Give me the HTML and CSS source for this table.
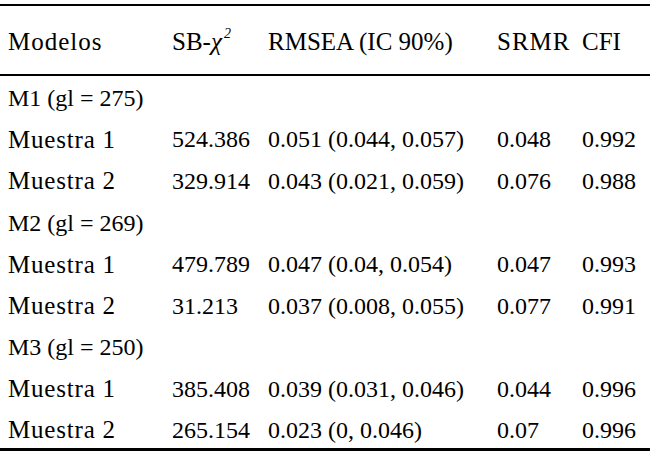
FILE: index.html
```html
<!DOCTYPE html>
<html lang="es">
<head>
<meta charset="utf-8">
<title>Modelos</title>
<link rel="stylesheet" href="styles.css">
</head>
<body>
<table class="fit">
  <colgroup>
    <col class="w1"><col class="w2"><col class="w3"><col class="w4"><col class="w5">
  </colgroup>
  <thead>
    <tr class="head">
      <th class="wide">Modelos</th>
      <th>SB-<i class="chi">χ</i><sup>2</sup></th>
      <th>RMSEA (IC 90%)</th>
      <th class="wide">SRMR</th>
      <th>CFI</th>
    </tr>
  </thead>
  <tbody>
    <tr class="grp"><td colspan="5">M1 (gl = 275)</td></tr>
    <tr><td class="lbl">Muestra 1</td><td>524.386</td><td>0.051 (0.044, 0.057)</td><td>0.048</td><td>0.992</td></tr>
    <tr><td class="lbl">Muestra 2</td><td>329.914</td><td>0.043 (0.021, 0.059)</td><td>0.076</td><td>0.988</td></tr>
    <tr class="grp"><td colspan="5">M2 (gl = 269)</td></tr>
    <tr><td class="lbl">Muestra 1</td><td>479.789</td><td>0.047 (0.04, 0.054)</td><td>0.047</td><td>0.993</td></tr>
    <tr><td class="lbl">Muestra 2</td><td>31.213</td><td>0.037 (0.008, 0.055)</td><td>0.077</td><td>0.991</td></tr>
    <tr class="grp"><td colspan="5">M3 (gl = 250)</td></tr>
    <tr><td class="lbl">Muestra 1</td><td>385.408</td><td>0.039 (0.031, 0.046)</td><td>0.044</td><td>0.996</td></tr>
    <tr><td class="lbl">Muestra 2</td><td>265.154</td><td>0.023 (0, 0.046)</td><td>0.07</td><td>0.996</td></tr>
  </tbody>
</table>
</body>
</html>
```
FILE: styles.css
```css
html, body {
  margin: 0;
  padding: 0;
  background: #ffffff;
}
body {
  font-family: "Liberation Serif", "Times New Roman", Tinos, serif;
  color: #000000;
}
.fit {
  width: 650px;
  table-layout: fixed;
  border-collapse: collapse;
  margin-top: 4px;
  border-top: 2px solid #000000;
  border-bottom: 3px solid #000000;
}
.w1 { width: 164px; }
.w2 { width: 96px; }
.w3 { width: 229px; }
.w4 { width: 85px; }
.w5 { width: 76px; }

.head { height: 70px; }
.fit th {
  font-weight: normal;
  text-align: left;
  font-size: 25px;
  padding: 3px 0 0 8px;
  vertical-align: middle;
  white-space: nowrap;
  border-bottom: 2px solid #000000;
}
.fit th.wide { letter-spacing: 1px; }
.chi { font-style: italic; }
.fit sup {
  font-size: 14px;
  font-style: italic;
  line-height: 0;
  vertical-align: 12px;
  margin-left: 2px;
}
.fit tbody tr { height: 41.6px; }
.fit td {
  font-size: 24px;
  padding: 5px 0 0 8px;
  vertical-align: middle;
  white-space: nowrap;
}
.fit td.lbl {
  font-size: 25px;
  letter-spacing: 0.8px;
}
.grp td { font-size: 24px; }
```
